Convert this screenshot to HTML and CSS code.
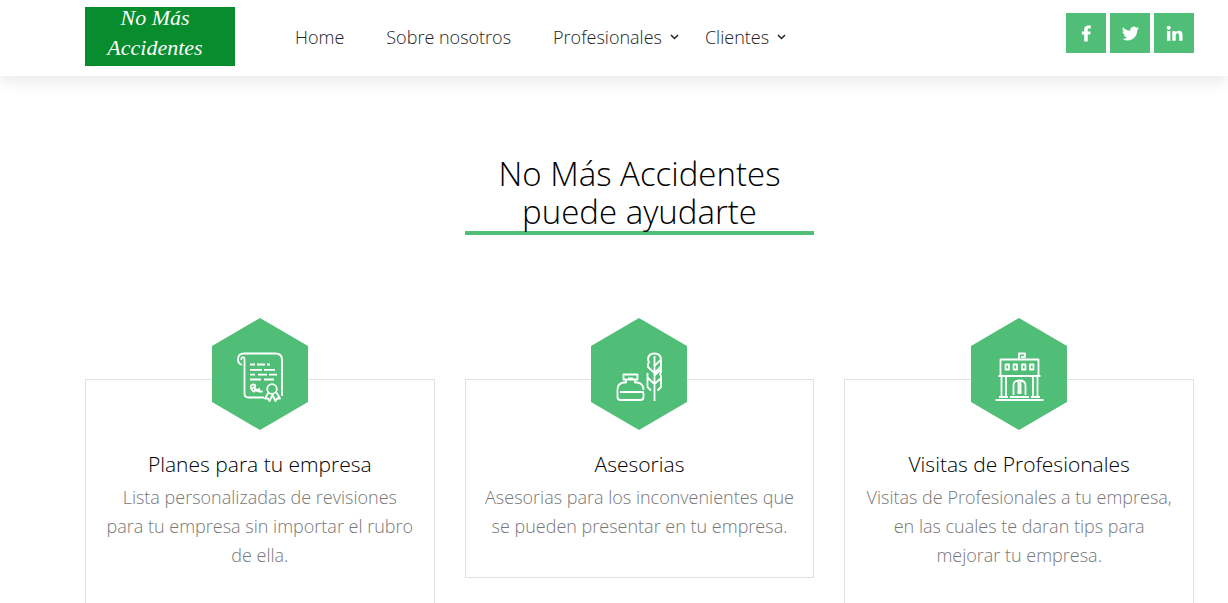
FILE: index.html
```html
<!DOCTYPE html>
<html lang="es">
<head>
<meta charset="utf-8">
<meta name="viewport" content="width=device-width, initial-scale=1">
<title>No Más Accidentes</title>
<link rel="stylesheet" href="styles.css">
</head>
<body>
<header class="header">
  <a class="logo" href="#"><span>No Más</span><span>Accidentes</span></a>
  <nav class="nav">
    <a class="nav-link" href="#">Home</a>
    <a class="nav-link" href="#">Sobre nosotros</a>
    <a class="nav-link nav-drop" href="#">Profesionales
      <svg class="chevron" viewBox="0 0 9 6"><path d="M1 1l3.500 3.500L8 1"/></svg></a>
    <a class="nav-link nav-drop" href="#">Clientes
      <svg class="chevron" viewBox="0 0 9 6"><path d="M1 1l3.500 3.500L8 1"/></svg></a>
  </nav>
  <div class="social">
    <a class="social-link" href="#" aria-label="Facebook"><svg viewBox="0 0 18 18"><path d="M6.500 17.500V10H4V6.800h2.500V4.600C6.500 1.900 8.200.5 10.700.5h2.900v3.200h-1.700c-1.200 0-1.600.5-1.600 1.400v1.700h3.100L12.900 10h-2.600v7.500z"/></svg></a>
    <a class="social-link" href="#" aria-label="Twitter"><svg viewBox="0 0 24 24"><path d="M23.950 4.570a10 10 0 0 1-2.820.77 4.960 4.960 0 0 0 2.160-2.720c-.95.550-2 .950-3.130 1.180a4.920 4.920 0 0 0-8.380 4.480C7.690 8.100 4.070 6.130 1.640 3.160a4.920 4.920 0 0 0 1.520 6.570 4.900 4.900 0 0 1-2.230-.61v.06a4.920 4.920 0 0 0 3.950 4.830 5 5 0 0 1-2.210.08 4.940 4.940 0 0 0 4.600 3.420A9.870 9.870 0 0 1 0 19.540a13.990 13.990 0 0 0 7.550 2.210c9.050 0 14-7.500 14-13.980l-.02-.64a9.940 9.940 0 0 0 2.420-2.560z"/></svg></a>
    <a class="social-link" href="#" aria-label="LinkedIn"><svg viewBox="0 0 18 18"><circle cx="2.800" cy="3" r="2.200"/><path d="M1 6.300h3.600v10.400H1zM6.700 6.300h3.400v1.500c.6-1 1.800-1.800 3.400-1.800 3.100 0 4 2 4 4.700v6h-3.600v-5.300c0-1.400-.1-2.600-1.700-2.600s-1.900 1.200-1.900 2.600v5.300H6.700z"/></svg></a>
  </div>
</header>

<main class="services">
  <h2 class="heading">No Más Accidentes puede ayudarte</h2>
  <div class="cards">
    <article class="card">
      <svg class="hexagon" viewBox="0 0 98 112">
        <path class="hexagon-fill" d="M49 0L97 28V84L49 112L1 84V28z"/>
        <g class="icon-lines">
          <path d="M33.500 41v34.500q0 4 4 4H53M71 69V42q0-6.500-6.500-6.500H33q-6 0-6 6 0 4 4 5.500M33.500 41c0-3-4-2-3 1"/>
          <path d="M39 46.500h5m2 0h8m2 0h3M39 51.800h12m2 0h11M39 56.600h5m3 0h9m2 0h8M39 61.500h11m3 0h10M44 73.500c-4 0-6-7-2-7s2 3-1 4M44 73.500V70l2 3 2-2v2.500h3.500"/>
          <circle cx="61" cy="71" r="4.800"/>
          <path d="M57.500 74.500l-3.500 6h3l1.500 2.500 3-6 3 6L66 80.500h3l-3.500-6M71 69v9"/>
        </g>
      </svg>
      <h3 class="card-title">Planes para tu empresa</h3>
      <p class="card-text">Lista personalizadas de revisiones para tu empresa sin importar el rubro de ella.</p>
    </article>
    <article class="card">
      <svg class="hexagon" viewBox="0 0 98 112">
        <path class="hexagon-fill" d="M49 0L97 28V84L49 112L1 84V28z"/>
        <g class="icon-lines">
          <path d="M33.500 56.500h14v5h-14zM36 61.500v3h-2.500q-6 1-6 7v7.500q0 3 3 3h20q3 0 3-3v-4M45 61.500v3h2.500q6 1 6 7.500M30 74h24M38 60.500h5"/>
          <path d="M64.500 38v45M61 72.500l-3.500-3.500V55M58 50v-4l1-2-1-2q0-6.500 6.500-6.500T71 42v12l-1 2 1 2v11l-3.500 3.500M58 49l6.500 6L71 48M58 60l6.500 6 6.500-6M64.500 48l6-6M64.500 57.500l6-6"/>
        </g>
      </svg>
      <h3 class="card-title">Asesorias</h3>
      <p class="card-text">Asesorias para los inconvenientes que se pueden presentar en tu empresa.</p>
    </article>
    <article class="card">
      <svg class="hexagon" viewBox="0 0 98 112">
        <path class="hexagon-fill" d="M49 0L97 28V84L49 112L1 84V28z"/>
        <g class="icon-lines">
          <path d="M30.500 57V41.500h38V57M49 41v-5.500h6v3.500h-4M28.500 58h42M25.500 82h48M29 79h9m2 0h19m2 0h9M31.500 59v19m4.500-19v19M63 59v19m4.500-19v19M43.500 77V67.500q0-5 6-5t6 5V77M48.500 63v13m2-13v13M47.500 74h4"/>
          <path d="M35.500 46.500h3.500v5h-3.500zM43.500 46.500h3.500v5h-3.500zM52 46.500h3.500v5h-3.500zM60 46.500h3.500v5h-3.500z"/>
        </g>
      </svg>
      <h3 class="card-title">Visitas de Profesionales</h3>
      <p class="card-text">Visitas de Profesionales a tu empresa, en las cuales te daran tips para mejorar tu empresa.</p>
    </article>
  </div>
</main>
</body>
</html>
```
FILE: styles.css
```css
* { box-sizing: border-box; }

body {
  margin: 0;
  background: #fff;
  color: #000;
  font-family: "Open Sans", "Noto Sans", sans-serif;
  font-weight: 300;
}

a { color: inherit; text-decoration: none; }

.header {
  display: flex;
  align-items: flex-start;
  padding: 7px 34px 10px 85px;
  background: #fff;
  box-shadow: 0 4px 16px rgba(0, 0, 0, 0.1);
}

.logo {
  display: grid;
  gap: 8px;
  width: 150px;
  padding: 0 10px 7px 0;
  background: #078d2d;
  color: #fff;
  font: italic 22px/22px "Liberation Serif", serif;
  text-align: center;
}

.nav {
  display: flex;
  flex: 1;
  gap: 42px;
  padding: 18px 0 0 60px;
  font-size: 18px;
  line-height: 24px;
  color: #222;
}

.nav-drop { display: flex; align-items: center; gap: 8px; }
.nav-drop + .nav-drop { margin-left: -16px; }

.chevron {
  width: 9px;
  height: 6px;
  fill: none;
  stroke: #222;
  stroke-width: 1.5;
}

.social { display: flex; gap: 4px; padding-top: 6px; }

.social-link {
  display: grid;
  place-items: center;
  width: 40px;
  height: 40px;
  background: #51be78;
}

.social-link svg { width: 17px; height: 17px; fill: #fff; }

.services { padding: 79px 34px 0 85px; }

.heading {
  width: calc((100% - 60px) / 3);
  margin: 0 auto;
  border-bottom: 4px solid #51be78;
  font-size: 33px;
  font-weight: 300;
  line-height: 38px;
  text-align: center;
}

.cards {
  display: grid;
  grid-template-columns: repeat(3, 1fr);
  gap: 30px;
  align-items: start;
  padding-top: 144px;
}

.card {
  display: flex;
  flex-direction: column;
  align-items: center;
  padding: 0 18px 36px;
  border: 1px solid #dee2e6;
  text-align: center;
}

.hexagon { width: 98px; height: 112px; margin-top: -62px; }
.hexagon-fill { fill: #51be78; }

.icon-lines {
  fill: none;
  stroke: #fff;
  stroke-width: 1.8;
  stroke-linejoin: round;
}

.card-title {
  margin: 22px 0 7px;
  font-size: 21px;
  font-weight: 300;
  line-height: 24px;
}

.card-text {
  margin: 0;
  color: #777;
  font-size: 18px;
  line-height: 29px;
}
```
